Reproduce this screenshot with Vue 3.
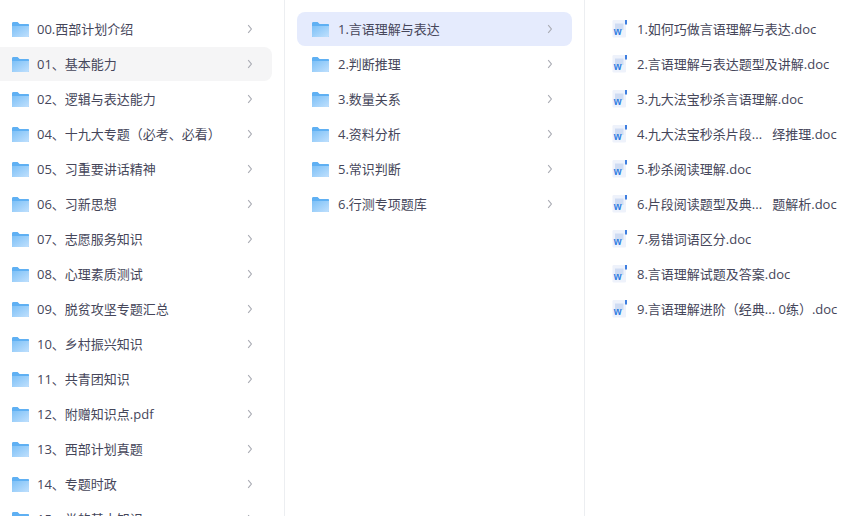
<script setup>
const col1 = ['00.西部计划介绍','01、基本能力','02、逻辑与表达能力','04、十九大专题（必考、必看）','05、习重要讲话精神','06、习新思想','07、志愿服务知识','08、心理素质测试','09、脱贫攻坚专题汇总','10、乡村振兴知识','11、共青团知识','12、附赠知识点.pdf','13、西部计划真题','14、专题时政','15、党的基本知识']
const col2 = ['1.言语理解与表达','2.判断推理','3.数量关系','4.资料分析','5.常识判断','6.行测专项题库']
const col3 = ['1.如何巧做言语理解与表达.doc','2.言语理解与表达题型及讲解.doc','3.九大法宝秒杀言语理解.doc','4.九大法宝秒杀片段...\u00a0\u00a0\u00a0绎推理.doc','5.秒杀阅读理解.doc','6.片段阅读题型及典...\u00a0\u00a0\u00a0题解析.doc','7.易错词语区分.doc','8.言语理解试题及答案.doc','9.言语理解进阶（经典... 0练）.doc']
</script>

<template>
  <div class="page">
    <div class="col first">
      <div v-for="(n, i) in col1" :key="n" class="row" :class="{ hover: i === 1 }">
        <svg class="folder" viewBox="0 0 17 16" preserveAspectRatio="none"><defs><linearGradient id="fa" x1="0" y1="0" x2="1" y2="1"><stop offset="0" stop-color="#7cc0f7"/><stop offset="1" stop-color="#c0e0fd"/></linearGradient></defs><path d="M0 1.5C0 .7.6 0 1.4 0h4.2l2 2.2H16c.6 0 1 .4 1 1V15c0 .6-.4 1-1 1H1c-.6 0-1-.4-1-1z" fill="#5fb0f3"/><path d="M0 4.2h17V15c0 .6-.4 1-1 1H1c-.6 0-1-.4-1-1z" fill="url(#fa)"/></svg>
        <span class="name">{{ n }}</span>
        <svg class="chev" viewBox="0 0 6 10"><path d="M1.2 1.2l3.2 3.8-3.2 3.8" fill="none" stroke="#a9abb3" stroke-width="1.1"/></svg>
      </div>
    </div>
    <div class="col second">
      <div v-for="(n, i) in col2" :key="n" class="row" :class="{ active: i === 0 }">
        <svg class="folder" viewBox="0 0 17 16" preserveAspectRatio="none"><path d="M0 1.5C0 .7.6 0 1.4 0h4.2l2 2.2H16c.6 0 1 .4 1 1V15c0 .6-.4 1-1 1H1c-.6 0-1-.4-1-1z" fill="#5fb0f3"/><path d="M0 4.2h17V15c0 .6-.4 1-1 1H1c-.6 0-1-.4-1-1z" fill="url(#fa)"/></svg>
        <span class="name">{{ n }}</span>
        <svg class="chev" viewBox="0 0 6 10"><path d="M1.2 1.2l3.2 3.8-3.2 3.8" fill="none" stroke="#a9abb3" stroke-width="1.1"/></svg>
      </div>
    </div>
    <div class="col third">
      <div v-for="n in col3" :key="n" class="row">
        <svg class="doc" viewBox="0 0 15 18"><rect x="0.5" y="0" width="13.5" height="17.5" rx="1.2" fill="#eef2fb"/><rect x="3" y="3.5" width="8.5" height="6.5" fill="#cfdcf3"/><rect x="13" y="0" width="2" height="4.5" fill="#3f7fe0"/><text x="1.8" y="15" class="w">w</text></svg>
        <span class="name">{{ n }}</span>
      </div>
    </div>
  </div>
</template>

<style scoped>
.page {
  display: flex;
  width: 853px;
  height: 516px;
  overflow: hidden;
  background: #fff;
  font-family: "Open Sans", "Noto Sans CJK SC", sans-serif;
  font-size: 13px;
  color: #45465a;
}
.col {
  box-sizing: border-box;
  height: 516px;
  padding-top: 12px;
  overflow: hidden;
  flex: none;
}
.first {
  width: 285px;
  padding-right: 12px;
  border-right: 1px solid #eceef1;
}
.second {
  width: 300px;
  padding: 12px 12px 0;
  border-right: 1px solid #eceef1;
}
.third {
  width: 268px;
  padding-left: 27px;
}
.row {
  display: flex;
  align-items: center;
  height: 34px;
  margin-bottom: 1px;
  border-radius: 8px;
  padding-left: 12px;
  box-sizing: border-box;
}
.first .row {
  border-radius: 0 8px 8px 0;
}
.second .row {
  padding-left: 15px;
}
.third .row {
  padding-left: 0;
}
.hover {
  background: #f5f5f6;
}
.active {
  background: #e5ebfd;
}
.folder {
  width: 17px;
  height: 15px;
  flex: none;
  margin-right: 8px;
}
.second .folder {
  margin-right: 9px;
}
.doc {
  width: 15px;
  height: 18px;
  flex: none;
  margin-right: 10px;
}
.w {
  font-family: "Liberation Sans", sans-serif;
  font-size: 10px;
  font-weight: 700;
  fill: #2f7de1;
}
.name {
  flex: 1;
  white-space: nowrap;
  margin-bottom: 2px;
}
.chev {
  width: 6px;
  height: 10px;
  flex: none;
  margin-right: 19px;
}
</style>
